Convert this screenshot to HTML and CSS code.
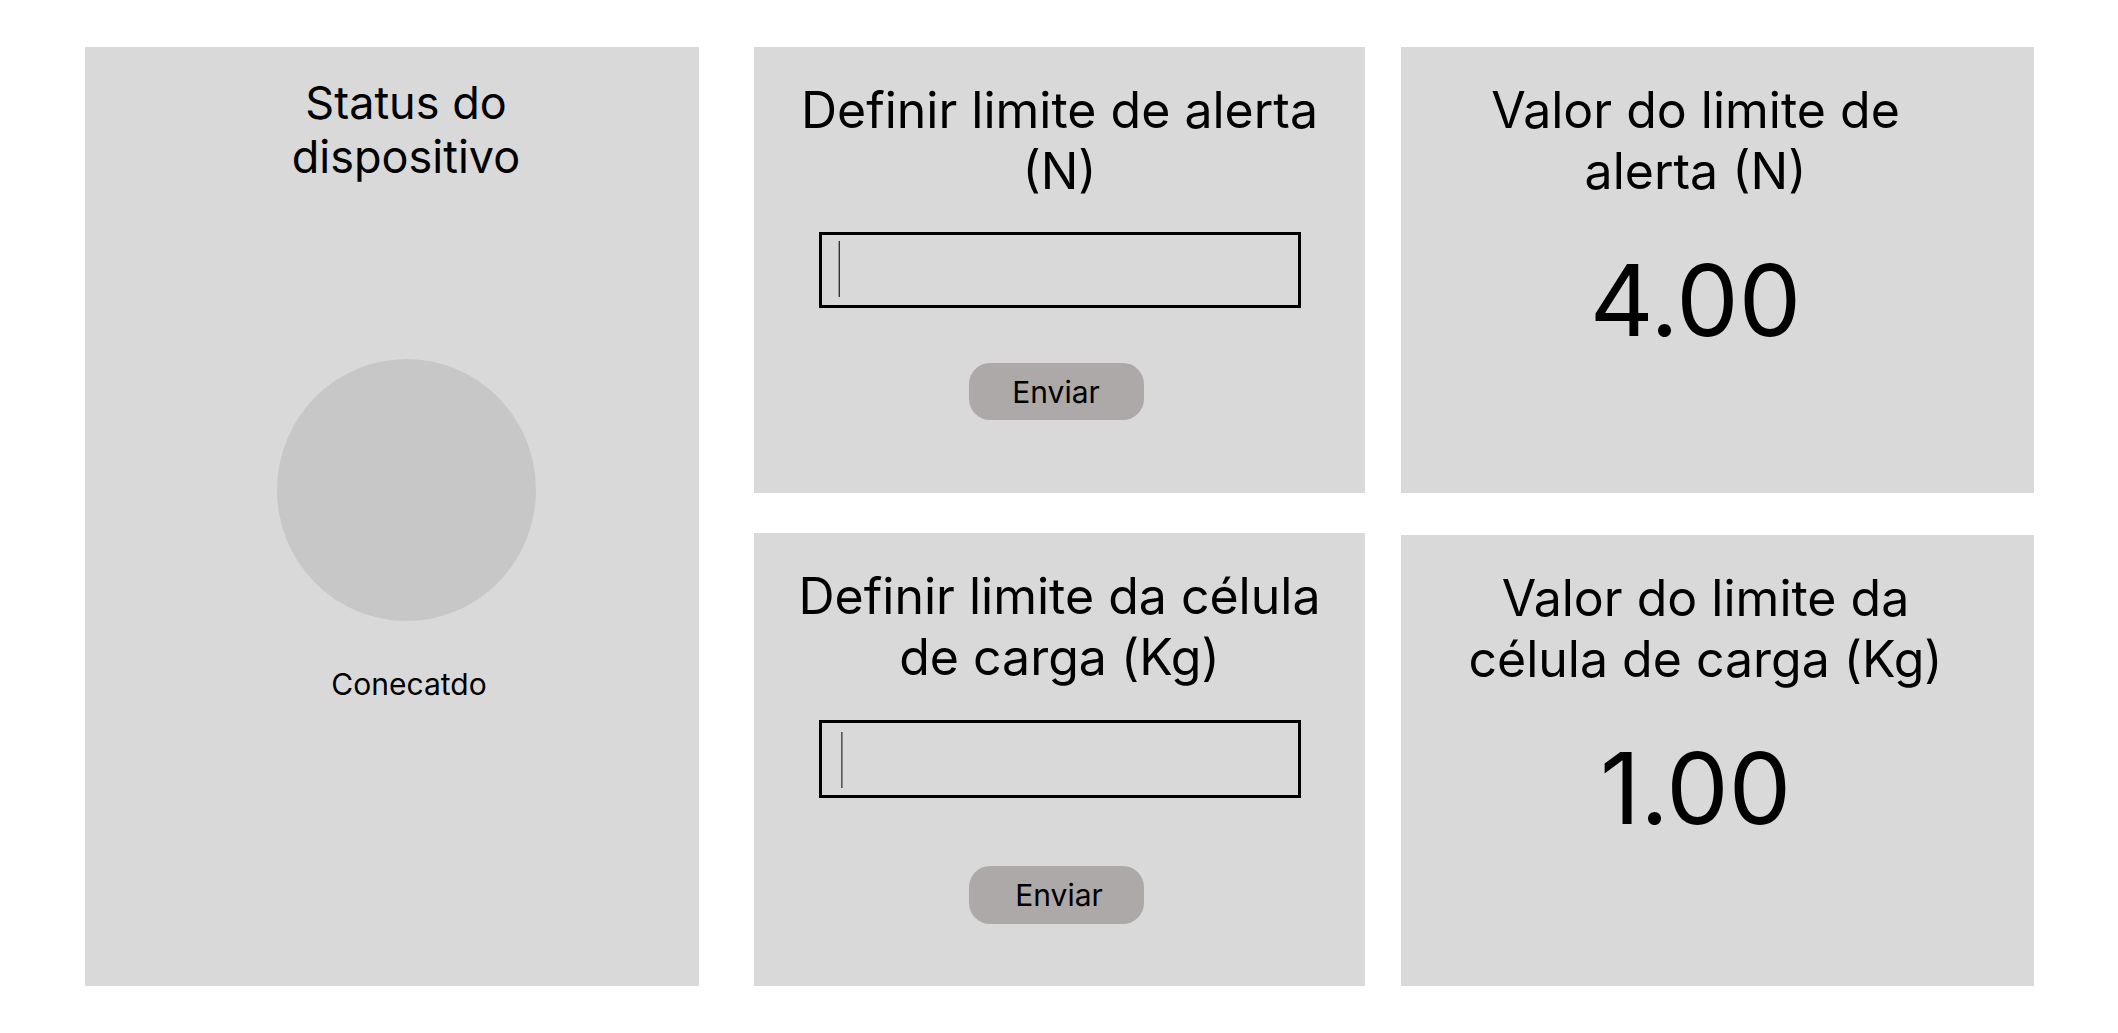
FILE: index.html
```html
<!DOCTYPE html>
<html lang="pt-BR">
<head>
  <meta charset="utf-8">
  <meta name="viewport" content="width=device-width, initial-scale=1">
  <title>Painel do dispositivo</title>
  <link rel="stylesheet" href="styles.css">
</head>
<body>
  <main class="dashboard">
    <section class="card card-status">
      <h2 class="status-title">Status do dispositivo</h2>
      <div class="status-light"></div>
      <p class="status-label">Conecatdo</p>
    </section>

    <div class="panels">
      <div class="stack stack-settings">
        <section class="card card-form">
          <h2 class="title"><label for="alert-limit">Definir limite de alerta (N)</label></h2>
          <form class="limit-form">
            <div class="field">
              <input class="field-input" id="alert-limit" type="text" inputmode="decimal">
            </div>
            <button class="send" type="button">Enviar</button>
          </form>
        </section>
        <section class="card card-form">
          <h2 class="title"><label for="cell-limit">Definir limite da célula de carga (Kg)</label></h2>
          <form class="limit-form limit-form-cell">
            <div class="field">
              <input class="field-input" id="cell-limit" type="text" inputmode="decimal">
            </div>
            <button class="send" type="button">Enviar</button>
          </form>
        </section>
      </div>

      <div class="stack stack-values">
        <section class="card card-value">
          <h2 class="title">Valor do limite de alerta (N)</h2>
          <p class="value">4.00</p>
        </section>
        <section class="card card-value card-value-cell">
          <h2 class="title">Valor do limite da célula de carga (Kg)</h2>
          <p class="value">1.00</p>
        </section>
      </div>
    </div>
  </main>
</body>
</html>
```
FILE: styles.css
```css
* {
  box-sizing: border-box;
}

body {
  margin: 0;
  background: #fff;
  color: #000;
  font-family: Inter, "Liberation Sans", sans-serif;
  font-optical-sizing: none;
}

h2,
p {
  margin: 0;
  font-weight: 400;
}

.dashboard {
  display: grid;
  grid-template-columns: 614fr 1280fr;
  gap: 55px;
  min-height: 100vh;
  padding: 47px 84px 47px 85px;
}

.panels {
  display: grid;
  grid-template-columns: 611fr 633fr;
  gap: 36px;
}

.stack {
  display: grid;
}

.stack-settings {
  grid-template-rows: 446fr 453fr;
  gap: 40px;
}

.stack-values {
  grid-template-rows: 446fr 451fr;
  gap: 42px;
}

.card {
  display: flex;
  flex-direction: column;
  align-items: center;
  background: #d9d9d9;
  text-align: center;
}

.title {
  font-size: 50px;
  line-height: 61px;
}

/* Device status */
.card-status {
  padding: 29px 0 29px 28px;
}

.status-title {
  max-width: 300px;
  font-size: 45px;
  line-height: 54px;
}

.status-light {
  width: 259px;
  height: 262px;
  margin-top: 175px;
  border-radius: 50%;
  background: #c7c7c7;
}

.status-label {
  margin-top: 45px;
  padding-left: 6px;
  font-size: 30px;
  line-height: 36px;
}

/* Limit forms */
.card-form {
  padding: 33px 40px;
}

.limit-form {
  display: flex;
  flex-direction: column;
  align-items: flex-start;
  gap: 55px;
  width: 100%;
  max-width: 482px;
  margin-top: 30px;
}

.limit-form-cell {
  gap: 68px;
  margin-top: 32px;
}

.field {
  position: relative;
  width: 100%;
}

.field-input {
  display: block;
  width: 100%;
  height: 76px;
  padding: 0 20px;
  border: 3px solid #000;
  border-radius: 0;
  outline: 0;
  background: transparent;
  font: inherit;
  font-size: 30px;
}

.field::after {
  content: "";
  position: absolute;
  top: 9px;
  left: 19px;
  height: 56px;
  border-left: 1px solid #999;
  border-right: 1px solid #333;
}

.limit-form-cell .field-input {
  height: 78px;
}

.limit-form-cell .field::after {
  top: 12px;
  left: 22px;
  border-left-color: #555;
  border-right-color: #888;
}

.send {
  width: 175px;
  height: 57px;
  margin-left: 150px;
  padding: 0;
  border: 0;
  border-radius: 21px;
  background: #ada9a8;
  color: #000;
  font: inherit;
  font-size: 30px;
  line-height: 36px;
}

.limit-form-cell .send {
  height: 58px;
  padding-left: 6px;
}

/* Current values */
.card-value {
  padding: 33px 44px 33px 0;
}

.card-value .title {
  max-width: 500px;
}

.card-value-cell {
  padding-right: 24px;
}

.value {
  margin-top: 38px;
  font-size: 99px;
  line-height: 121px;
}

.card-value-cell .value {
  padding-right: 20px;
}
```
